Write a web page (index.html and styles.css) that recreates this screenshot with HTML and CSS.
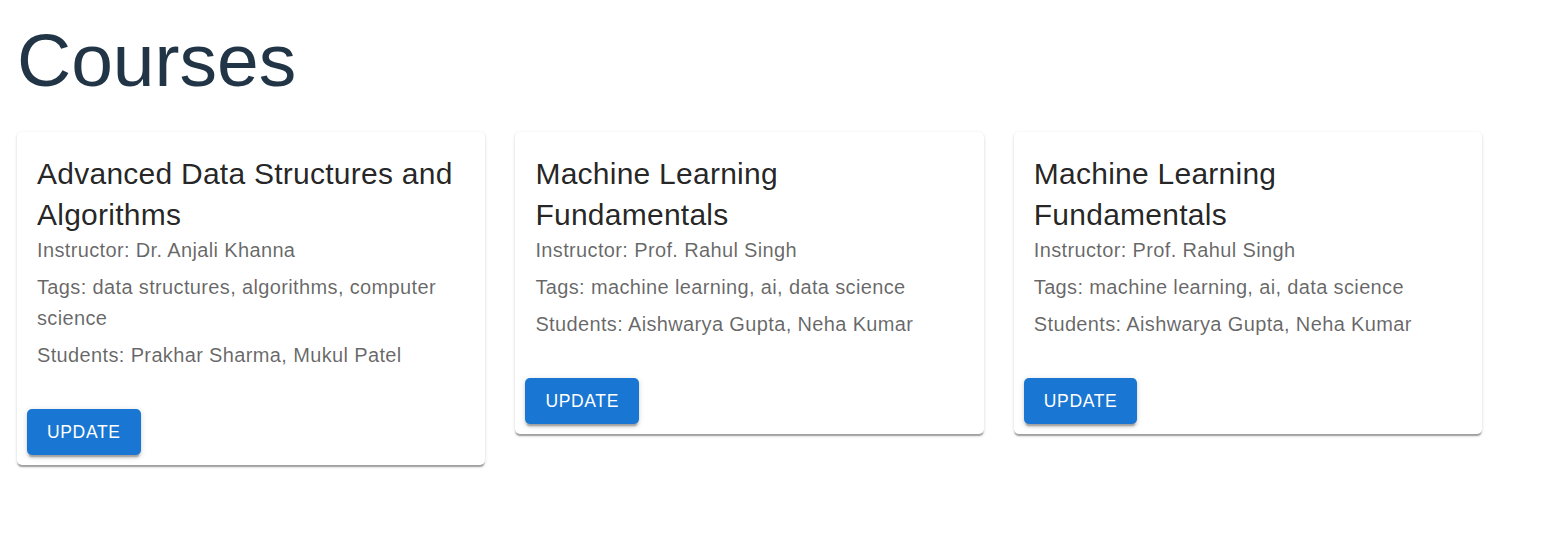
FILE: index.html
```html
<!DOCTYPE html>
<html lang="en">
<head>
<meta charset="utf-8">
<title>Courses</title>
<link rel="stylesheet" href="styles.css">
</head>
<body>
<main class="page">
  <h1 class="page-title">Courses</h1>
  <div class="course-list">
    <section class="card">
      <div class="card-content">
        <h2 class="card-title">Advanced Data Structures and Algorithms</h2>
        <p class="card-text">Instructor: Dr. Anjali Khanna</p>
        <p class="card-text">Tags: data structures, algorithms, computer science</p>
        <p class="card-text">Students: Prakhar Sharma, Mukul Patel</p>
      </div>
      <div class="card-actions">
        <button class="btn" type="button">Update</button>
      </div>
    </section>
    <section class="card">
      <div class="card-content">
        <h2 class="card-title">Machine Learning Fundamentals</h2>
        <p class="card-text">Instructor: Prof. Rahul Singh</p>
        <p class="card-text">Tags: machine learning, ai, data science</p>
        <p class="card-text">Students: Aishwarya Gupta, Neha Kumar</p>
      </div>
      <div class="card-actions">
        <button class="btn" type="button">Update</button>
      </div>
    </section>
    <section class="card">
      <div class="card-content">
        <h2 class="card-title">Machine Learning Fundamentals</h2>
        <p class="card-text">Instructor: Prof. Rahul Singh</p>
        <p class="card-text">Tags: machine learning, ai, data science</p>
        <p class="card-text">Students: Aishwarya Gupta, Neha Kumar</p>
      </div>
      <div class="card-actions">
        <button class="btn" type="button">Update</button>
      </div>
    </section>
  </div>
</main>
</body>
</html>
```
FILE: styles.css
```css
html, body {
  margin: 0;
  padding: 0;
  background: #ffffff;
}

body {
  font-family: "Liberation Sans", Arial, Helvetica, sans-serif;
}

.page {
  padding: 15px 17px 40px;
}

.page-title {
  margin: 0 0 27px;
  font-size: 75px;
  font-weight: 400;
  line-height: 90px;
  letter-spacing: 0;
  color: #213547;
}

.course-list {
  display: flex;
  align-items: flex-start;
  gap: 30px;
}

.card {
  width: 468.4px;
  background: #ffffff;
  border-radius: 5px;
  box-shadow: 0 2.5px 1.25px -1.25px rgba(0,0,0,0.2),
              0 1.25px 1.25px 0 rgba(0,0,0,0.14),
              0 1.25px 3.75px 0 rgba(0,0,0,0.12);
}

.card-content {
  padding: 21px 20px 28px;
}

.card-title {
  margin: 0;
  font-size: 30px;
  font-weight: 400;
  line-height: 41px;
  letter-spacing: 0.25px;
  color: rgba(0,0,0,0.87);
}

.card-text {
  margin: 0 0 6px;
  font-size: 20px;
  line-height: 31px;
  letter-spacing: 0.36px;
  color: rgba(0,0,0,0.6);
}

.card-text:last-child {
  margin-bottom: 0;
}

.card-actions {
  display: flex;
  align-items: center;
  padding: 10px;
}

.btn {
  min-width: 80px;
  padding: 7.5px 20px;
  border: 0;
  border-radius: 5px;
  background: #1976d2;
  color: #ffffff;
  font-family: "Liberation Sans", Arial, Helvetica, sans-serif;
  font-size: 17.5px;
  font-weight: 400;
  line-height: 30.6px;
  letter-spacing: 0.65px;
  text-transform: uppercase;
  box-shadow: 0 3.75px 1.25px -2.5px rgba(0,0,0,0.2),
              0 2.5px 2.5px 0 rgba(0,0,0,0.14),
              0 1.25px 6.25px 0 rgba(0,0,0,0.12);
  cursor: pointer;
}
```
